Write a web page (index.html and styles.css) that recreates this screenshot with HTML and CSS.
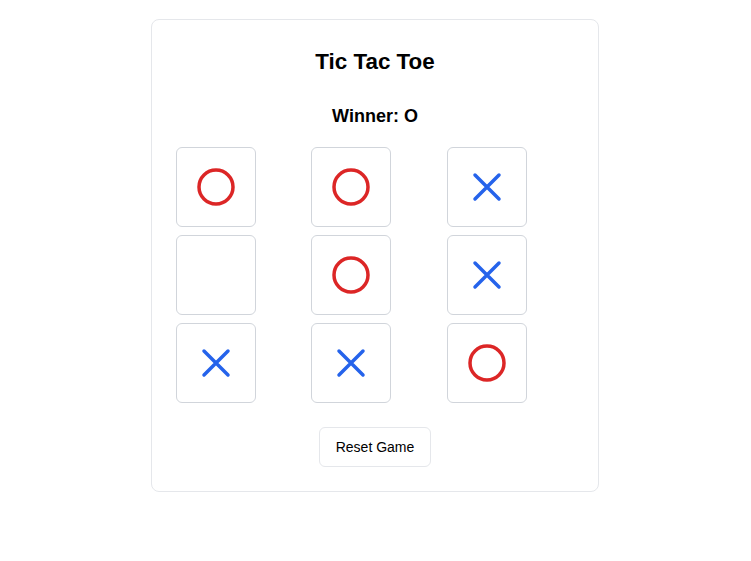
FILE: index.html
```html
<!DOCTYPE html>
<html>
<head>
<meta charset="utf-8">
<link rel="stylesheet" href="styles.css">
</head>
<body>
<div class="card">
  <h1 class="title">Tic Tac Toe</h1>
  <div class="status">Winner: O</div>
  <div class="board">
    <div class="cell"><svg class="o" viewBox="0 0 40 40"><circle cx="20" cy="20" r="17"/></svg></div>
    <div class="cell"><svg class="o" viewBox="0 0 40 40"><circle cx="20" cy="20" r="17"/></svg></div>
    <div class="cell"><svg class="x" viewBox="0 0 40 40"><path d="M8 8L32 32M32 8L8 32"/></svg></div>
    <div class="cell"></div>
    <div class="cell"><svg class="o" viewBox="0 0 40 40"><circle cx="20" cy="20" r="17"/></svg></div>
    <div class="cell"><svg class="x" viewBox="0 0 40 40"><path d="M8 8L32 32M32 8L8 32"/></svg></div>
    <div class="cell"><svg class="x" viewBox="0 0 40 40"><path d="M8 8L32 32M32 8L8 32"/></svg></div>
    <div class="cell"><svg class="x" viewBox="0 0 40 40"><path d="M8 8L32 32M32 8L8 32"/></svg></div>
    <div class="cell"><svg class="o" viewBox="0 0 40 40"><circle cx="20" cy="20" r="17"/></svg></div>
  </div>
  <div class="actions"><button class="reset">Reset Game</button></div>
</div>
</body>
</html>
```
FILE: styles.css
```css
html, body {
  margin: 0;
  padding: 0;
  background: #ffffff;
}
body {
  font-family: "Liberation Sans", Arial, sans-serif;
  color: #000;
  padding: 19px 1px 0 0;
}
.card {
  width: 398px;
  margin: 0 auto;
  padding: 24px;
  border: 1px solid #e5e7eb;
  border-radius: 8px;
  box-sizing: content-box;
}
.title {
  margin: 2px 0 22px;
  font-size: 22.4px;
  line-height: 32px;
  font-weight: 700;
  text-align: center;
}
.status {
  margin: 0 0 19px;
  font-size: 18px;
  line-height: 28px;
  font-weight: 700;
  text-align: center;
  position: relative;
  top: 2px;
}
.board {
  display: grid;
  grid-template-columns: repeat(3, 1fr);
  gap: 8px;
  justify-items: start;
}
.cell {
  width: 80px;
  height: 80px;
  box-sizing: border-box;
  border: 1px solid #d1d5db;
  border-radius: 6px;
  display: flex;
  align-items: center;
  justify-content: center;
}
.cell svg {
  width: 40px;
  height: 40px;
  fill: none;
}
.o circle {
  stroke: #dc2626;
  stroke-width: 3.5;
}
.x path {
  stroke: #2563eb;
  stroke-width: 3.5;
  stroke-linecap: round;
}
.actions {
  margin-top: 24px;
  display: flex;
  justify-content: center;
}
.reset {
  font-family: "Liberation Sans", Arial, sans-serif;
  font-size: 14px;
  height: 40px;
  padding: 0 16px;
  background: #fff;
  color: #000;
  border: 1px solid #e5e7eb;
  border-radius: 6px;
}
```
